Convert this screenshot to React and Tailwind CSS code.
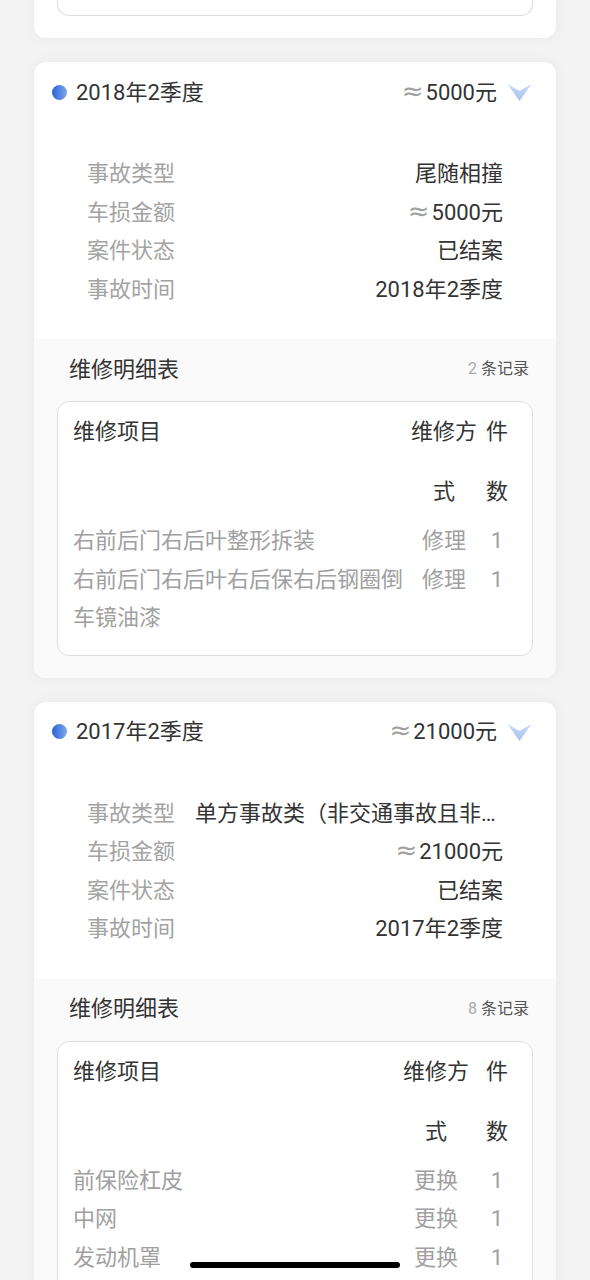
import React from "react";

const cards = [
  {
    period: "2018年2季度",
    amount: "5000元",
    type: "尾随相撞",
    status: "已结案",
    methodCol: "grid-cols-[1fr_70px_36px]",
    count: 2,
    items: [
      ["右前后门右后叶整形拆装", "修理", "1"],
      ["右前后门右后叶右后保右后钢圈倒车镜油漆", "修理", "1"],
    ],
  },
  {
    period: "2017年2季度",
    amount: "21000元",
    type: "单方事故类（非交通事故且非机动车碰撞）",
    status: "已结案",
    methodCol: "grid-cols-[1fr_86px_36px]",
    count: 8,
    items: [
      ["前保险杠皮", "更换", "1"],
      ["中网", "更换", "1"],
      ["发动机罩", "更换", "1"],
      ["左前大灯", "更换", "1"],
      ["右前大灯", "更换", "1"],
      ["水箱框架", "更换", "1"],
      ["冷凝器", "更换", "1"],
      ["散热器", "更换", "1"],
    ],
  },
];

//little down arrow next to the amount
function Chevron() {
  return (
    <svg width="27" height="20" viewBox="0 0 26 20">
      <defs>
        <linearGradient id="chev" x1="0" y1="0" x2="0" y2="1">
          <stop offset="0" stopColor="#c8dbf7" />
          <stop offset="1" stopColor="#a5c3ef" />
        </linearGradient>
      </defs>
      <path d="M1 2 L13 9 L25 2 L13 19 Z" fill="url(#chev)" />
    </svg>
  );
}

//the wide grey approx sign
function Approx() {
  return <span className="mr-[2px] font-['DejaVu_Sans',sans-serif] text-[26px] leading-none text-[#a0a0a0]">≈</span>;
}

function InfoRow({ label, children }) {
  return (
    <div className="flex items-center leading-[38.5px]">
      <span className="shrink-0 text-[#a3a3a3]">{label}</span>
      <span className="ml-[20px] min-w-0 flex-1 truncate text-right text-[#333]">{children}</span>
    </div>
  );
}

function ClaimCard({ card }) {
  return (
    <div className="rounded-[12px] bg-white shadow-[0_0_14px_rgba(0,0,0,0.05)] overflow-hidden">
      {/* header */}
      <div className="flex h-[60px] items-center pl-[18px] pr-[23px]">
        <span className="h-[15px] w-[15px] rounded-full bg-linear-to-r from-[#2a62d4] to-[#7ea6ee]"></span>
        <span className="ml-[9px] text-[22px] text-[#333]">{card.period}</span>
        <span className="ml-auto text-[22px] text-[#333]">
          <Approx />
          {card.amount}
        </span>
        <span className="ml-[9px] flex items-center">
          <Chevron />
        </span>
      </div>

      {/* basic info */}
      <div className="px-[53px] pt-[33px] pb-[30px] text-[22px]">
        <InfoRow label="事故类型">{card.type}</InfoRow>
        <InfoRow label="车损金额">
          <Approx />
          {card.amount}
        </InfoRow>
        <InfoRow label="案件状态">{card.status}</InfoRow>
        <InfoRow label="事故时间">{card.period}</InfoRow>
      </div>

      {/* repair list */}
      <div className="bg-[#fafafa] px-[23px] pb-[22px]">
        <div className="flex h-[60px] items-center pl-[12px] pr-[4px]">
          <span className="text-[22px] text-[#333]">维修明细表</span>
          <span className="ml-auto text-[16px] text-[#555]">
            <span className="text-[#aaa]">{card.count}</span> 条记录
          </span>
        </div>
        <div className="mt-[2px] rounded-[12px] border border-[#dedede] bg-white pl-[15px] pr-[17px] pb-[17px] text-[22px]">
          <div className={"grid leading-[60px] text-[#333] " + card.methodCol}>
            <span>维修项目</span>
            <span className="text-center">维修方式</span>
            <span className="text-center">件数</span>
          </div>
          {card.items.map((it, i) => (
            <div key={i} className={"grid items-start leading-[38.5px] text-[#a0a0a0] " + card.methodCol}>
              <span>{it[0]}</span>
              <span className="text-center">{it[1]}</span>
              <span className="text-center">{it[2]}</span>
            </div>
          ))}
        </div>
      </div>
    </div>
  );
}

export default function App() {
  return (
    <div className="min-h-screen bg-[#f3f3f3] px-[34px] font-['Roboto','Noto_Sans_CJK_SC',sans-serif]">
      {/* tail of the previous card */}
      <div className="h-[38px] rounded-b-[12px] bg-white px-[23px] shadow-[0_0_14px_rgba(0,0,0,0.05)]">
        <div className="h-[16px] rounded-b-[12px] border border-t-0 border-[#dedede]"></div>
      </div>

      <div className="flex flex-col gap-[24px] pt-[24px] pb-[24px]">
        {cards.map((c) => (
          <ClaimCard key={c.period} card={c} />
        ))}
      </div>

      <div className="fixed bottom-[12px] left-1/2 h-[6px] w-[210px] -translate-x-1/2 rounded-full bg-black"></div>
    </div>
  );
}
